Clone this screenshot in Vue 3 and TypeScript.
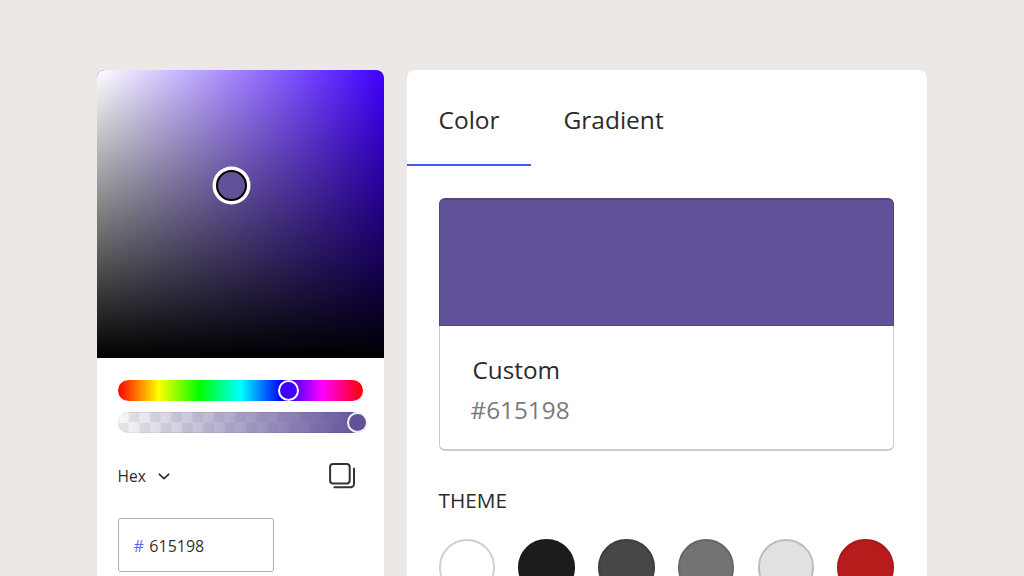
<script setup lang="ts">
const themeColors: string[] = ['#ffffff', '#1c1c1c', '#474747', '#737373', '#e1e1e1', '#b71c1c']
const borders: string[] = ['#cfcfcf', '#1c1c1c', '#3f3f3f', '#666666', '#bdbdbd', '#a81a1a']
</script>

<template>
  <div class="page">
    <section class="left">
      <div class="square">
        <div class="sat"></div>
        <div class="val"></div>
        <div class="handle"></div>
      </div>
      <div class="controls">
        <div class="hue"><span class="hue-thumb"></span></div>
        <div class="alpha">
          <div class="alpha-fill"></div>
          <span class="alpha-thumb"></span>
        </div>
        <div class="format">
          <span class="hex-label">Hex</span>
          <svg class="chev" width="12" height="7" viewBox="0 0 12 7">
            <path d="M1.2 1.2 L6 5.6 L10.8 1.2" fill="none" stroke="#2b2b2b" stroke-width="1.6" stroke-linecap="round" stroke-linejoin="round" />
          </svg>
          <svg class="copy" width="28" height="28" viewBox="0 0 28 28">
            <rect x="2.1" y="1.9" width="19.6" height="19.6" rx="3" fill="none" stroke="#333" stroke-width="2" />
            <path d="M6.4 25.3 H22.5 A3.5 3.5 0 0 0 26 21.8 V6.4" fill="none" stroke="#333" stroke-width="2" stroke-linecap="round" />
          </svg>
        </div>
        <div class="hex-input"><span class="hash">#</span><span class="hex-value">615198</span></div>
      </div>
    </section>
    <section class="right">
      <div class="tabs">
        <div class="tab active">Color</div>
        <div class="tab">Gradient</div>
      </div>
      <div class="body">
        <div class="card">
          <div class="swatch"></div>
          <div class="card-info">
            <div class="custom">Custom</div>
            <div class="code">#615198</div>
          </div>
        </div>
        <div class="theme">THEME</div>
        <div class="dots">
          <span v-for="(c, i) in themeColors" :key="c" class="dot" :style="{ background: c, borderColor: borders[i] }"></span>
        </div>
      </div>
    </section>
  </div>
</template>

<style>
html, body { margin: 0; height: 576px; overflow: hidden; background: #ece8e5; }
</style>

<style scoped>
.page {
  display: flex;
  gap: 22.5px;
  padding: 70px 0 0 97px;
  height: 506px;
  overflow: hidden;
  background: #ece8e5;
  font-family: "Open Sans", "Noto Sans", sans-serif;
  color: #2b2b2b;
}
.left {
  width: 287px;
  height: 540px;
  flex: none;
  background: #fff;
  border-radius: 8px 8px 0 0;
  overflow: hidden;
}
.square {
  position: relative;
  height: 288px;
  background: #4000ff;
}
.sat, .val { position: absolute; inset: 0; }
.sat { background: linear-gradient(to right, #fff, rgba(255, 255, 255, 0)); }
.val { background: linear-gradient(to bottom, rgba(0, 0, 0, 0), #000); }
.handle {
  position: absolute;
  left: 119px;
  top: 99.5px;
  width: 27px;
  height: 27px;
  border-radius: 50%;
  background: #615198;
  border: 2px solid #000;
  box-shadow: 0 0 0 3.5px #fff;
}
.controls { padding: 22px 20.5px 0; }
.hue {
  position: relative;
  height: 21px;
  width: 245.5px;
  border-radius: 11px;
  background: linear-gradient(to right, #f00 0%, #ff0 16.66%, #0f0 33.33%, #0ff 50%, #00f 66.66%, #f0f 83.33%, #f00 100%);
}
.hue-thumb {
  position: absolute;
  left: 160px;
  top: 0;
  width: 17px;
  height: 17px;
  border: 2px solid #fff;
  border-radius: 50%;
  background: #4000ff;
}
.alpha {
  position: relative;
  margin-top: 11px;
  height: 21px;
  width: 245.5px;
  border-radius: 11px;
  background: repeating-conic-gradient(#eaeaea 0 25%, #fbfbfb 0 50%) 0 0 / 21.33px 21px;
}
.alpha-fill {
  position: absolute;
  inset: 0;
  border-radius: 11px;
  background: linear-gradient(to right, rgba(97, 81, 152, 0.02), #615198);
  box-shadow: inset 0 0 0 1px rgba(0, 0, 0, 0.06);
}
.alpha-thumb {
  position: absolute;
  right: -5px;
  top: 0;
  width: 17px;
  height: 17px;
  border: 2px solid #f3f1f7;
  border-radius: 50%;
  background: #615198;
}
.format {
  display: flex;
  align-items: center;
  margin-top: 29px;
  height: 28px;
  width: 238.5px;
}
.hex-label { font-size: 15.5px; line-height: 28px; }
.chev { margin-left: 12.5px; }
.copy { margin-left: auto; }
.hex-input {
  display: flex;
  align-items: center;
  box-sizing: border-box;
  margin-top: 28px;
  width: 156.5px;
  height: 54px;
  padding: 2px 0 0 15px;
  background: #fff;
  border: 1px solid #b0b0b0;
  border-radius: 3px;
  font-size: 16px;
}
.hash { color: #4f6bed; margin-right: 5.5px; }
.hex-value { color: #333; }
.right {
  width: 520.5px;
  height: 540px;
  flex: none;
  background: #fff;
  border-radius: 8px 8px 0 0;
  overflow: hidden;
}
.tabs { display: flex; }
.tab {
  padding: 30px 32px 24px;
  height: 40px;
  line-height: 40px;
  font-size: 24.5px;
  color: #2b2b2b;
  border-bottom: 2px solid transparent;
}
.tab + .tab { margin-left: 1px; }
.tab.active { border-bottom-color: #3d5af1; width: 60px; }
.body { padding: 32px 33px 0 32px; }
.card { height: 253px; }
.swatch {
  box-sizing: border-box;
  height: 128px;
  background: #615198;
  border: 1px solid #54457f;
  border-top-width: 2px;
  border-radius: 6px 6px 0 0;
}
.card-info {
  box-sizing: border-box;
  height: 125px;
  padding: 26px 31px 0;
  border: 1px solid #cbcbcb;
  border-top: 0;
  border-bottom-width: 2px;
  border-radius: 0 0 6px 6px;
}
.custom { font-size: 24.3px; line-height: 36px; margin-left: 2px; color: #2b2b2b; }
.code { font-size: 24.3px; line-height: 36px; margin-top: 4px; color: #7a7a7a; }
.theme { margin-top: 35px; font-size: 20.8px; line-height: 28px; color: #2b2b2b; }
.dots { display: flex; justify-content: space-between; margin-top: 25px; }
.dot {
  box-sizing: border-box;
  width: 56.5px;
  height: 56.5px;
  border-radius: 50%;
  border: 2px solid;
}
</style>
